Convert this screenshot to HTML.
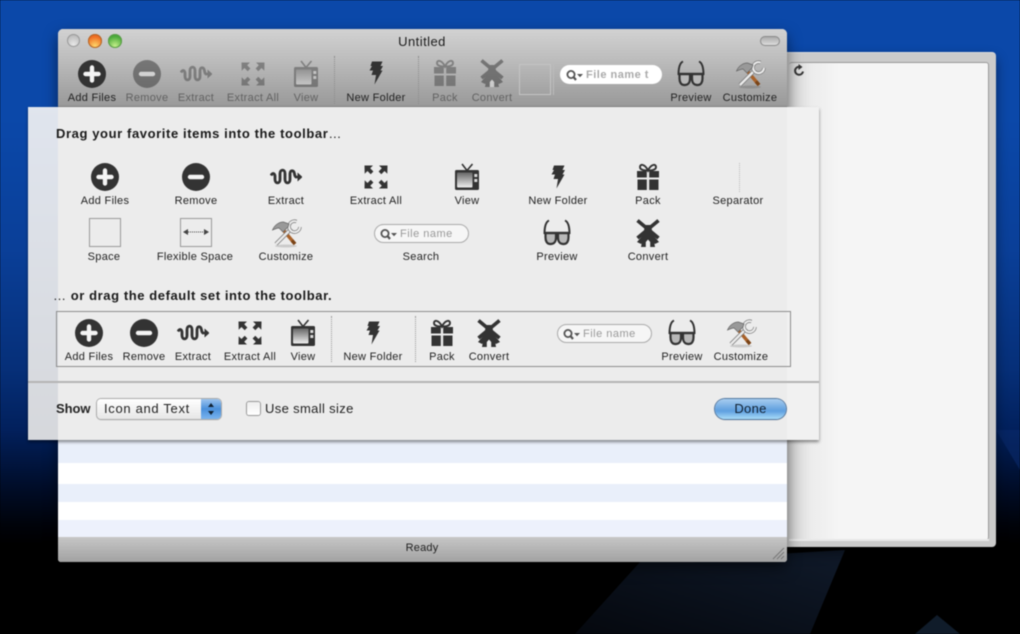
<!DOCTYPE html>
<html><head><meta charset="utf-8"><style>
html,body{margin:0;padding:0;width:1020px;height:634px;overflow:hidden;background:#000}
#root{position:absolute;left:0;top:0;width:1020px;height:634px;overflow:hidden;filter:blur(.55px);font-family:"Liberation Sans",sans-serif;
background:linear-gradient(180deg,#0b48a9 0,#0b48a9 120px,#0a3f98 250px,#062f78 370px,#02205c 430px,#000c26 490px,#00030a 525px,#000 545px)}
.a{position:absolute}
.l{position:absolute;transform:translateX(-50%);margin-top:1px;font-size:11px;line-height:13px;letter-spacing:.3px;white-space:nowrap;color:#222}
.d{color:#626262}
.i{position:absolute;width:32px;height:32px;overflow:visible}
.sep{position:absolute;width:0;border-left:1px dotted #8c8c8c}
.search{position:absolute;background:#fff;border-radius:10px;box-sizing:border-box;font-size:11px;letter-spacing:.5px;color:#999;white-space:nowrap;overflow:hidden}
.search svg{position:absolute;left:6px;top:4px;width:20px;height:13px}
.search span{position:absolute;left:26px;top:3px;line-height:14px}
</style></head><body><div id="root">
<svg width="0" height="0" style="position:absolute"><defs>
<linearGradient id="sc" x1="0" y1="0" x2="0" y2="1"><stop offset="0" stop-color="#666"/><stop offset="1" stop-color="#eee"/></linearGradient>
<linearGradient id="wp" x1="1" y1="0" x2="0" y2="1"><stop offset="0" stop-color="#101a2a"/><stop offset="1" stop-color="#05080e"/></linearGradient>
<symbol id="add" viewBox="0 0 32 32"><circle cx="16" cy="16" r="14" fill="#333"/><path d="M16 9.500v13M9.500 16h13" stroke="#f4f4f4" stroke-width="4.400" stroke-linecap="round"/></symbol>
<symbol id="rem" viewBox="0 0 32 32"><circle cx="16" cy="16" r="14" fill="#333"/><path d="M10 16h12" stroke="#f4f4f4" stroke-width="4.400" stroke-linecap="round"/></symbol>
<symbol id="ext" viewBox="0 0 32 32"><path d="M1 14.500C2.500 11.500 4.500 12 5 15v3.500c.2 4.500 5 4.500 5 0V12.500c.2-4.500 5-4.500 5 0V18.500c.2 4.500 5 4.500 5 0V12.500c.3-4 4-3.500 4.500.5.300 2 1 3 2 3" fill="none" stroke="#333" stroke-width="2.800"/><path d="M25 14.800h2.500V11.500l5 4.500-5 4.500V17.200H25z" fill="#333"/></symbol>
<symbol id="all" viewBox="0 0 32 32"><path id="c" fill="#333" d="M4.500 4.500h8.500l-2.800 2.800 3.200 3.200-2.700 2.700-3.200-3.200-2.800 2.800z"/><use href="#c" transform="matrix(-1 0 0 1 32 0)"/><use href="#c" transform="matrix(1 0 0 -1 0 32)"/><use href="#c" transform="matrix(-1 0 0 -1 32 32)"/></symbol>
<symbol id="tv" viewBox="0 0 32 32"><path d="M11 3l5 6.500L21.500 3" fill="none" stroke="#333" stroke-width="1.600"/><rect x="4" y="9" width="24" height="20" rx="1.500" fill="#333"/><rect x="6" y="11.500" width="15.500" height="15" rx="1" fill="url(#sc)"/><rect x="23.300" y="13" width="3" height="3" fill="#ddd"/><rect x="23.300" y="18" width="3" height="3" fill="#ddd"/></symbol>
<symbol id="bolt" viewBox="0 0 32 32"><path d="M12 4.500h10.500l-2 4.500h2.500l-2.500 4.500h2L14.500 27.500l1.500-9.500h-4.500l1.500-4.500h-3.500l2.500-4.500h-1.500z" fill="#333"/></symbol>
<symbol id="pack" viewBox="0 0 32 32"><path d="M16 9.500C13 3 8 2.500 8 6c0 3 4 3.500 8 3.500 4 0 8-.5 8-3.500 0-3.500-5-3-8 3.500z" fill="none" stroke="#333" stroke-width="1.900"/><path d="M5 10h9.800v6.500H5zM17.200 10H27v6.500h-9.800zM5.500 18.500h9.300V29H5.500zM17.200 18.500h9.300V29h-9.300z" fill="#333"/></symbol>
<symbol id="mill" viewBox="0 0 32 32"><path d="M5.500 3.500L26.500 21M26.500 3.500L5.500 21" stroke="#333" stroke-width="3.600"/><path d="M5 25l6-7 4 3-6 6zM27 25l-6-7-4 3 6 6z" fill="#333"/><path d="M13 8h6l4 22H9z" fill="#333"/><path d="M13.800 30v-5l2.200-2.500 2.200 2.500v5z" fill="#eee"/></symbol>
<symbol id="gl" viewBox="0 0 32 32"><path d="M8 3.500C4.500 5 3.500 10 3.500 17M24 3.500C27.500 5 28.500 10 28.500 17" fill="none" stroke="#333" stroke-width="2"/><path d="M4.500 16h10.500v4.500c0 4-2 6.500-5 6.500H9c-3 0-4.500-3-4.500-6.500zM17 16h10.500v4.500c0 3.500-1.500 6.500-4.500 6.500h-1c-3 0-5-2.500-5-6.500z" fill="#b8b8b8" stroke="#333" stroke-width="2.200"/><path d="M3 16h26" stroke="#333" stroke-width="2.200"/></symbol>
<symbol id="tools" viewBox="0 0 32 32"><ellipse cx="16" cy="29" rx="11" ry="1.500" fill="#000" opacity=".14"/><path d="M12 11.500L25 27" stroke="#a9622a" stroke-width="3.400"/><path d="M25 27l-3-3.500" stroke="#7a4418" stroke-width="3.400"/><path d="M6 27L21.500 11.500" stroke="#777" stroke-width="4"/><path d="M6 27L21.500 11.500" stroke="#ececec" stroke-width="2.400"/><path d="M26.500 4.500A5.500 5.500 0 1 0 30 10" fill="none" stroke="#777" stroke-width="3.400"/><path d="M26.500 4.500A5.500 5.500 0 1 0 30 10" fill="none" stroke="#ececec" stroke-width="2"/><path d="M2.500 13C4.500 8 9 5 13.500 5L19 7l-1 3-5 5-4-4C7 11 5 12 2.500 13z" fill="#999" stroke="#666" stroke-width=".7"/></symbol>
<symbol id="q" viewBox="0 0 20 13"><circle cx="5" cy="5.500" r="3.600" fill="none" stroke="#555" stroke-width="1.800"/><path d="M7.500 8L10 11" stroke="#555" stroke-width="2.200"/><path d="M11 5h6l-3 3.200z" fill="#555"/></symbol>
</defs></svg>

<!-- wallpaper shapes -->
<svg class="a" style="left:0;top:0" width="1020" height="634"><polygon points="575,634 640,562 845,550 810,634" fill="url(#wp)"/><polygon points="915,634 937,615 960,634" fill="#101c2a"/><polygon points="996,430 1020,430 1020,470" fill="#0a2a6a" opacity=".6"/></svg>

<!-- back window -->
<div class="a" style="left:700px;top:52px;width:296px;height:495px;background:#cbcbcb;border-radius:4px;box-shadow:0 6px 12px rgba(0,0,0,.45);border-top:1px solid #ddd;box-sizing:border-box"></div>
<div class="a" style="left:789px;top:62px;width:200px;height:478px;background:linear-gradient(90deg,#cfcfcf 0,#ececec 22px,#f5f5f5 50px);border:1px solid #999;border-width:1px 1px 0 0;box-sizing:border-box;border-radius:3px"></div>
<div class="a" style="left:789px;top:539px;width:200px;height:2px;background:#e8e8e8"></div>
<svg class="a" style="left:792px;top:63px" width="14" height="14" viewBox="0 0 14 14"><path d="M11 8.500A4 4 0 1 1 7 3.800" fill="none" stroke="#333" stroke-width="2"/><path d="M6.500 1l4 3-4 3z" fill="#333"/></svg>

<!-- main window -->
<div class="a" style="left:58px;top:29px;width:729px;height:533px;border-radius:5px 5px 3px 3px;overflow:hidden;background:#fff;box-shadow:0 6px 14px rgba(0,0,0,.5)">
 <div class="a" style="left:0;top:0;width:729px;height:78px;background:linear-gradient(180deg,#d2d2d2 0,#bdbdbd 30px,#a4a4a4 62px,#9a9a9a 77px,#666 78px)"></div>
 <div class="a" style="left:0;top:411px;width:729px;height:23px;background:#e9effa"></div>
 <div class="a" style="left:0;top:455px;width:729px;height:18px;background:#e9effa"></div>
 <div class="a" style="left:0;top:491px;width:729px;height:17px;background:#edf1fc"></div>
 <div class="a" style="left:0;top:508px;width:729px;height:25px;background:linear-gradient(180deg,#c6c6c6,#a2a2a2)"></div>
</div>
<div class="l" style="left:422px;top:33px;font-size:13px;line-height:15px;letter-spacing:.45px;color:#1c1c1c">Untitled</div>
<div class="a" style="left:67px;top:34px;width:13px;height:13px;border-radius:50%;background:radial-gradient(circle at 50% 80%,#e8e8e8,#aaa);box-shadow:inset 0 0 0 1px #999"></div>
<div class="a" style="left:88px;top:34px;width:14px;height:14px;border-radius:50%;background:radial-gradient(circle at 50% 85%,#ffd76a,#ee6a20 70%);box-shadow:inset 0 0 0 1px #b0652a"></div>
<div class="a" style="left:108px;top:34px;width:14px;height:14px;border-radius:50%;background:radial-gradient(circle at 50% 85%,#c4f08a,#48a838 70%);box-shadow:inset 0 0 0 1px #5a9a48"></div>
<div class="a" style="left:760px;top:36px;width:18px;height:8px;border-radius:5px;background:linear-gradient(#aaa,#ddd);border:1px solid #8a8a8a"></div>
<div class="l" style="left:422px;top:541px;color:#222;letter-spacing:.2px">Ready</div>
<svg class="a" style="left:771px;top:546px" width="14" height="14"><path d="M2 13L13 2M6 13L13 6M10 13L13 10" stroke="#777" stroke-width="1"/></svg>

<!-- toolbar icons -->
<svg class="i" style="left:76px;top:58px"><use href="#add"/></svg><div class="l" style="left:92px;top:91px">Add Files</div>
<svg class="i" style="left:131px;top:58px;opacity:.5"><use href="#rem"/></svg><div class="l d" style="left:147px;top:91px">Remove</div>
<svg class="i" style="left:180px;top:58px;opacity:.42"><use href="#ext"/></svg><div class="l d" style="left:196px;top:91px">Extract</div>
<svg class="i" style="left:237px;top:58px;opacity:.42"><use href="#all"/></svg><div class="l d" style="left:253px;top:91px">Extract All</div>
<svg class="i" style="left:290px;top:58px;opacity:.42"><use href="#tv"/></svg><div class="l d" style="left:306px;top:91px">View</div>
<div class="sep" style="left:334px;top:56px;height:48px"></div>
<svg class="i" style="left:360px;top:57px"><use href="#bolt"/></svg><div class="l" style="left:376px;top:91px">New Folder</div>
<div class="sep" style="left:418px;top:56px;height:48px"></div>
<svg class="i" style="left:429px;top:57px;opacity:.42"><use href="#pack"/></svg><div class="l d" style="left:445px;top:91px">Pack</div>
<svg class="i" style="left:476px;top:57px;opacity:.5"><use href="#mill"/></svg><div class="l d" style="left:492px;top:91px">Convert</div>
<div class="a" style="left:519px;top:64px;width:32px;height:31px;border:1px solid #c4c4c4;box-sizing:border-box"></div>
<div class="a" style="left:553px;top:64px;height:31px;border-left:1px solid #bbb"></div>
<div class="search" style="left:560px;top:65px;width:102px;height:19px;font-weight:bold;font-size:11px;color:#aaa;letter-spacing:.5px"><svg><use href="#q"/></svg><span>File name t</span></div>
<svg class="i" style="left:675px;top:58px"><use href="#gl"/></svg><div class="l" style="left:691px;top:91px">Preview</div>
<svg class="i" style="left:734px;top:58px"><use href="#tools"/></svg><div class="l" style="left:750px;top:91px">Customize</div>

<!-- sheet -->
<div class="a" style="left:28px;top:107px;width:791px;height:333px;background:linear-gradient(180deg,#e0e5ee,#d6d8dc);box-shadow:0 2px 3px rgba(0,0,0,.45)"></div>
<div class="a" style="left:58px;top:107px;width:729px;height:333px;background:#ececec"></div>
<div class="a" style="left:787px;top:107px;width:32px;height:333px;background:#f1f1f1"></div>
<div class="a" style="left:28px;top:381px;width:791px;height:2px;background:#b4b4b4"></div>
<div class="a" style="left:56px;top:126px;font-size:13px;line-height:15px;font-weight:bold;letter-spacing:.6px;color:#1a1a1a;white-space:nowrap">Drag your favorite items into the toolbar<span style="font-weight:normal">…</span></div>
<div class="a" style="left:53px;top:288px;font-size:13px;line-height:15px;font-weight:bold;letter-spacing:.58px;color:#1a1a1a;white-space:nowrap"><span style="font-weight:normal">…</span> or drag the default set into the toolbar.</div>

<!-- palette row 1 -->
<svg class="i" style="left:89px;top:161px"><use href="#add"/></svg><div class="l" style="left:105px;top:194px">Add Files</div>
<svg class="i" style="left:180px;top:161px"><use href="#rem"/></svg><div class="l" style="left:196px;top:194px">Remove</div>
<svg class="i" style="left:270px;top:161px"><use href="#ext"/></svg><div class="l" style="left:286px;top:194px">Extract</div>
<svg class="i" style="left:360px;top:161px"><use href="#all"/></svg><div class="l" style="left:376px;top:194px">Extract All</div>
<svg class="i" style="left:451px;top:161px"><use href="#tv"/></svg><div class="l" style="left:467px;top:194px">View</div>
<svg class="i" style="left:542px;top:161px"><use href="#bolt"/></svg><div class="l" style="left:558px;top:194px">New Folder</div>
<svg class="i" style="left:632px;top:161px"><use href="#pack"/></svg><div class="l" style="left:648px;top:194px">Pack</div>
<div class="sep" style="left:739px;top:163px;height:29px;border-color:#bbb"></div><div class="l" style="left:738px;top:194px">Separator</div>

<!-- palette row 2 -->
<div class="a" style="left:89px;top:218px;width:32px;height:29px;border:1px solid #999;box-sizing:border-box"></div><div class="l" style="left:104px;top:250px">Space</div>
<div class="a" style="left:180px;top:218px;width:32px;height:29px;border:1px solid #999;box-sizing:border-box"></div>
<svg class="a" style="left:181px;top:227px" width="30" height="10"><path d="M7 5h16" stroke="#444" stroke-dasharray="1 1"/><path d="M2 5l5-3v6zM28 5l-5-3v6z" fill="#444"/></svg><div class="l" style="left:195px;top:250px">Flexible Space</div>
<svg class="i" style="left:270px;top:217px"><use href="#tools"/></svg><div class="l" style="left:286px;top:250px">Customize</div>
<div class="search" style="left:374px;top:224px;width:95px;height:19px;background:#f6f6f6;border:1px solid #aaa"><svg style="left:5px;top:3px"><use href="#q"/></svg><span style="left:25px;top:2px">File name</span></div><div class="l" style="left:421px;top:250px">Search</div>
<svg class="i" style="left:541px;top:217px"><use href="#gl"/></svg><div class="l" style="left:557px;top:250px">Preview</div>
<svg class="i" style="left:632px;top:217px"><use href="#mill"/></svg><div class="l" style="left:648px;top:250px">Convert</div>

<!-- default set -->
<div class="a" style="left:56px;top:311px;width:735px;height:56px;border:1px solid #8e8e8e;box-sizing:border-box"></div>
<svg class="i" style="left:73px;top:317px"><use href="#add"/></svg><div class="l" style="left:89px;top:350px">Add Files</div>
<svg class="i" style="left:128px;top:317px"><use href="#rem"/></svg><div class="l" style="left:144px;top:350px">Remove</div>
<svg class="i" style="left:177px;top:317px"><use href="#ext"/></svg><div class="l" style="left:193px;top:350px">Extract</div>
<svg class="i" style="left:234px;top:317px"><use href="#all"/></svg><div class="l" style="left:250px;top:350px">Extract All</div>
<svg class="i" style="left:287px;top:317px"><use href="#tv"/></svg><div class="l" style="left:303px;top:350px">View</div>
<div class="sep" style="left:331px;top:316px;height:46px;border-color:#999"></div>
<svg class="i" style="left:357px;top:317px"><use href="#bolt"/></svg><div class="l" style="left:373px;top:350px">New Folder</div>
<div class="sep" style="left:415px;top:316px;height:46px;border-color:#999"></div>
<svg class="i" style="left:426px;top:317px"><use href="#pack"/></svg><div class="l" style="left:442px;top:350px">Pack</div>
<svg class="i" style="left:473px;top:317px"><use href="#mill"/></svg><div class="l" style="left:489px;top:350px">Convert</div>
<div class="search" style="left:557px;top:324px;width:95px;height:19px;background:#f6f6f6;border:1px solid #aaa"><svg style="left:5px;top:3px"><use href="#q"/></svg><span style="left:25px;top:2px">File name</span></div>
<svg class="i" style="left:666px;top:317px"><use href="#gl"/></svg><div class="l" style="left:682px;top:350px">Preview</div>
<svg class="i" style="left:725px;top:317px"><use href="#tools"/></svg><div class="l" style="left:741px;top:350px">Customize</div>

<!-- bottom controls -->
<div class="a" style="left:56px;top:401px;font-size:13px;line-height:15px;font-weight:bold;letter-spacing:-.05px;color:#222">Show</div>
<div class="a" style="left:97px;top:399px;width:124px;height:20px;border-radius:4px;background:linear-gradient(#fff,#e6e6e6);box-shadow:0 0 0 1px #aaa,0 1px 1px rgba(0,0,0,.25);overflow:hidden">
 <div class="a" style="left:7px;top:2px;font-size:13px;line-height:15px;letter-spacing:.68px;color:#222;white-space:nowrap">Icon and Text</div>
 <div class="a" style="left:104px;top:0;width:20px;height:20px;background:linear-gradient(#9cc4ee,#4a90dc 50%,#7ab4ee)"></div>
 <svg class="a" style="left:109px;top:3px" width="10" height="14"><path d="M5 1l3 4H2zM5 13l3-4H2z" fill="#123"/></svg>
</div>
<div class="a" style="left:247px;top:402px;width:13px;height:13px;border-radius:2px;background:linear-gradient(#eee,#fff);box-shadow:0 0 0 1px #999"></div>
<div class="a" style="left:265px;top:401px;font-size:13px;line-height:15px;letter-spacing:.35px;color:#222;white-space:nowrap">Use small size</div>
<div class="a" style="left:715px;top:399px;width:71px;height:20px;border-radius:10px;background:linear-gradient(#a8cdf0 0,#6fa9e2 45%,#5f9fe0 60%,#a8dcf8 100%);box-shadow:0 0 0 1px #5478a0,0 1px 1px rgba(0,0,0,.3);text-align:center;font-size:13px;line-height:19px;letter-spacing:.3px;color:#102030">Done</div>
</div></body></html>
